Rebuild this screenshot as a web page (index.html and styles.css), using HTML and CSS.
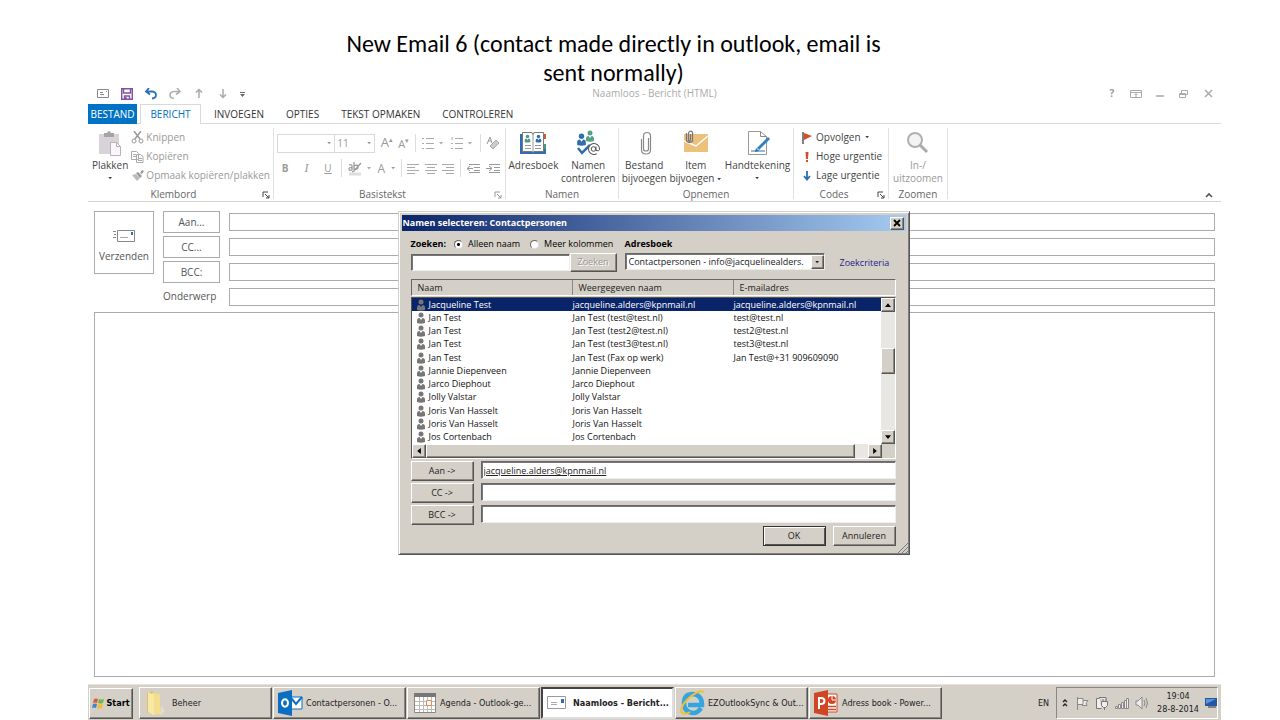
FILE: index.html
```html
<!DOCTYPE html>
<html lang="nl">
<head>
<meta charset="utf-8">
<title>Naamloos - Bericht (HTML)</title>
<link rel="stylesheet" href="styles.css">
</head>
<body>
<svg class="defs" aria-hidden="true">
  <symbol id="person" viewBox="0 0 10 12"><circle cx="5" cy="3" r="2.5"/><path d="M1 11V8.500Q1 6 3.500 6L5 8 6.500 6Q9 6 9 8.500V11Q5 12.500 1 11z"/></symbol>
  <symbol id="launch" viewBox="0 0 8 8"><path d="M1 6V1h5M3 3l4 4M7 4v3H4" fill="none" stroke="currentColor"/></symbol>
  <symbol id="down" viewBox="0 0 6 4"><path d="M0 0h5L2.500 3z" fill="currentColor"/></symbol>
</svg>
<main class="slide">
  <h1 class="slide-title">New Email 6 (contact made directly in outlook, email is<br>sent normally)</h1>

  <section class="app">
    <header class="titlebar">
      <div class="quick">
        <button aria-label="Bericht"><svg width="14" height="12" viewBox="0 0 14 12"><path d="M1.500 1.500h11v8h-11zM4 4.500h3M4 6.500h4M10 3.500h1" fill="none" stroke="#888"/></svg></button>
        <button aria-label="Opslaan"><svg width="14" height="12" viewBox="0 0 14 12"><path d="M1.700.7h10.600v10.600H1.700zM3.500 1v4h7V1M4.500 11V8h5v3M6 9v2" fill="none" stroke="#80529f" stroke-width="1.400"/></svg></button>
        <button aria-label="Ongedaan maken"><svg width="14" height="12" viewBox="0 0 14 12"><path d="M5 0L2 3.500l4 3M2 3.500h6q4 .5 4 3.500T8 10.500" fill="none" stroke="#2b72b8" stroke-width="1.800"/></svg></button>
        <button aria-label="Opnieuw"><svg width="14" height="12" viewBox="0 0 14 12"><path d="M9 0L12 3.500 8 6.500M12 3.500H6Q2 4 2 7T6 10.500" fill="none" stroke="#b0b0b0" stroke-width="1.600"/></svg></button>
        <button aria-label="Vorig item"><svg width="14" height="12" viewBox="0 0 14 12"><path d="M7 10V1M4 4.500L7 1.500l3 3" fill="none" stroke="#aaa" stroke-width="1.500"/></svg></button>
        <button aria-label="Volgend item"><svg width="14" height="12" viewBox="0 0 14 12"><path d="M7 1v9M4 6.500L7 9.500l3-3" fill="none" stroke="#aaa" stroke-width="1.500"/></svg></button>
        <button aria-label="Aanpassen"><svg width="14" height="12" viewBox="0 0 14 12"><path d="M0 4.500h5" stroke="#666"/><path d="M0 6h5L2.500 9z" fill="#666"/></svg></button>
      </div>
      <div class="caption">Naamloos - Bericht (HTML)</div>
      <div class="winbtns">
        <button aria-label="Help"><b>?</b></button>
        <button aria-label="Lintopties"><svg width="12" height="10" viewBox="0 0 12 10"><path d="M.5 1.500h11v7H.5zM1 3.500h10M6 8V5M4.500 6L6 4.500 7.500 6" fill="none" stroke="#aaa"/></svg></button>
        <button aria-label="Minimaliseren"><svg width="12" height="10" viewBox="0 0 12 10"><path d="M2 7h8" stroke="#aaa" stroke-width="1.500"/></svg></button>
        <button aria-label="Vorig formaat"><svg width="12" height="10" viewBox="0 0 12 10"><path d="M1.500 4.500h6v4h-6zM3.500 4V1.500h6v4H8M2 5.500h5" fill="none" stroke="#aaa"/></svg></button>
        <button aria-label="Sluiten"><svg width="12" height="10" viewBox="0 0 12 10"><path d="M3 1l7 7M10 1L3 8" stroke="#aaa" stroke-width="1.500"/></svg></button>
      </div>
    </header>

    <nav class="tabs">
      <button class="tab tab-file">BESTAND</button>
      <button class="tab tab-active">BERICHT</button>
      <button class="tab">INVOEGEN</button>
      <button class="tab">OPTIES</button>
      <button class="tab">TEKST OPMAKEN</button>
      <button class="tab">CONTROLEREN</button>
    </nav>

    <div class="ribbon">
      <div class="group g-clip has-launch">
        <div class="tools">
          <button class="big"><svg width="26" height="27" viewBox="0 0 26 27"><path d="M2 5h20v20H2z" fill="#d8d3d6"/><path d="M7 8V4h3q2-4 4 0h3v4z" fill="#a5a5a5"/><path d="M13.500 13.500h6l4 4v9h-10z" fill="#faf6fb" stroke="#bbb0bd"/><path d="M19.500 13.500v4h4" fill="none" stroke="#bbb0bd"/></svg><span>Plakken</span><svg class="caret"><use href="#down"/></svg></button>
          <div class="smalls dim">
            <button class="small"><svg width="13" height="13" viewBox="0 0 13 13"><path d="M3 0l6 8M10 0L4 8" stroke="#999" stroke-width="1.500"/><circle cx="3" cy="10" r="2" fill="none" stroke="#999"/><circle cx="10" cy="10" r="2" fill="none" stroke="#999"/></svg>Knippen</button>
            <button class="small"><svg width="13" height="13" viewBox="0 0 13 13"><path d="M.5 1.500h5l2 2v6h-7zM5.500 4.500h4l2.500 2v6H5.500zM2 4.500h3M2 6.500h3M7 8.500h4M7 10.500h4" fill="#fff" stroke="#aaa"/></svg>Kopiëren</button>
            <button class="small"><svg width="13" height="13" viewBox="0 0 13 13"><path d="M1 6l4-1 4 4-3 3z" fill="#bbb"/><path d="M5 4l2-1 4 4-2 2zM9 4l2-3 2 1-2 3z" fill="#999"/></svg>Opmaak kopiëren/plakken</button>
          </div>
        </div>
        <div class="group-name">Klembord</div><svg class="launch"><use href="#launch"/></svg>
      </div>

      <div class="group g-text has-launch">
        <div class="format">
          <div class="frow">
            <div class="combo combo-font"><svg class="caret"><use href="#down"/></svg></div>
            <div class="combo combo-size"><span>11</span><svg class="caret"><use href="#down"/></svg></div>
            <span class="grow">A<sup>▴</sup></span><span class="shrink">A<sup>▾</sup></span>
            <i class="bar"></i>
            <svg width="24" height="14" viewBox="0 0 24 14"><path d="M1 2.500h2M1 7.500h2M1 12.500h2M5 2.500h8M5 7.500h8M5 12.500h8" stroke="#aaa"/><path d="M18 6h4l-2 2.500z" fill="#aaa"/></svg>
            <svg width="24" height="14" viewBox="0 0 24 14"><path d="M2 1v3M1 7.500h2M1 12.500h2M5 2.500h8M5 7.500h8M5 12.500h8" stroke="#aaa"/><path d="M18 6h4l-2 2.500z" fill="#aaa"/></svg>
            <i class="bar"></i>
            <svg width="14" height="14" viewBox="0 0 14 14"><path d="M1 8l3-7 2 6M2 5h3" fill="none" stroke="#999"/><path d="M4 10l6-6 3 3-6 6z" fill="#ccc" stroke="#aaa"/></svg>
          </div>
          <div class="frow">
            <b class="fb">B</b><em class="fb">I</em><u class="fb">U</u>
            <i class="bar"></i>
            <svg width="24" height="15" viewBox="0 0 24 15"><path d="M1 13h12" stroke="#ddd" stroke-width="3"/><path d="M1 4q3-1 3 1v4q-3 1-3-1t3-1M6 1v7q4 1 4-2T6 5M13 2L6 10l-2 1" fill="none" stroke="#999" stroke-width="1.300"/><path d="M19 6h4l-2 2.500z" fill="#aaa"/></svg>
            <span class="fa">A</span><svg class="caret"><use href="#down"/></svg>
            <i class="bar"></i>
            <svg width="12" height="11" viewBox="0 0 12 11"><path d="M0 1.500h12M0 4.500h8M0 7.500h12M0 10.500h8" stroke="#aaa"/></svg>
            <svg width="12" height="11" viewBox="0 0 12 11"><path d="M0 1.500h12M2 4.500h8M0 7.500h12M2 10.500h8" stroke="#aaa"/></svg>
            <svg width="12" height="11" viewBox="0 0 12 11"><path d="M0 1.500h12M4 4.500h8M0 7.500h12M4 10.500h8" stroke="#aaa"/></svg>
            <i class="bar"></i>
            <svg width="14" height="11" viewBox="0 0 14 11"><path d="M3 1.500h11M8 4.500h6M8 7.500h6M3 9.500h11M7 5.500H1M4 3L1 5.500 4 8" stroke="#999" fill="none"/></svg>
            <svg width="14" height="11" viewBox="0 0 14 11"><path d="M3 1.500h11M8 4.500h6M8 7.500h6M3 9.500h11M0 5.500h6M3 3l3 2.500L3 8" stroke="#999" fill="none"/></svg>
          </div>
        </div>
        <div class="group-name">Basistekst</div><svg class="launch dim"><use href="#launch"/></svg>
      </div>

      <div class="group g-names">
        <div class="tools">
          <button class="big"><svg width="27" height="27" viewBox="0 0 27 27"><path d="M0 5h26v20H0z" fill="#2f6fae"/><path d="M24 5h2v5h-2z" fill="#d65532"/><path d="M24 10h2v5h-2z" fill="#fff"/><path d="M24 15h2v5h-2z" fill="#4b9b80"/><path d="M2.500 3.500H11q2 0 2 2 0-2 2-2h8.500v19H15q-2 0-2 1 0-1-2-1H2.500z" fill="#fff" stroke="#777"/><path d="M13 5v18M5 16.500h6M5 19.500h6M15 16.500h6M15 19.500h6" stroke="#999"/><use href="#person" x="4" y="5" width="7" height="9" fill="#4b9b80"/><use href="#person" x="15" y="5" width="7" height="9" fill="#2f6fae"/></svg><span>Adresboek</span></button>
          <button class="big"><svg width="27" height="27" viewBox="0 0 27 27"><use href="#person" x="10" y="1" width="10" height="12" fill="#58a184"/><use href="#person" x="1" y="4" width="11" height="13" fill="#2f6fae"/><path d="M3 19l4 5 8-8" fill="none" stroke="#2f6fae" stroke-width="2.500"/><circle cx="19" cy="20" r="5.500" fill="#fff" stroke="#555" stroke-dasharray="29 6" transform="rotate(60 19 20)"/><circle cx="18.500" cy="20" r="2.300" fill="none" stroke="#555"/><path d="M21 17.500v4q3 1 3.500-1" fill="none" stroke="#555"/></svg><span>Namen<br>controleren</span></button>
        </div>
        <div class="group-name">Namen</div>
      </div>

      <div class="group g-insert">
        <div class="tools">
          <button class="big"><svg width="27" height="27" viewBox="0 0 27 27"><path d="M17.500 9v11q0 2-2.500 2t-2.500-2V7q0-3.500 3.500-3.500T19.500 7v14q0 4-4.500 4t-4.500-4V10" fill="none" stroke="#888" stroke-width="1.200"/></svg><span>Bestand<br>bijvoegen</span></button>
          <button class="big"><svg width="27" height="27" viewBox="0 0 27 27"><path d="M2 5h24v18H2z" fill="#ecc17c"/><path d="M2 12l12 5L26 7" fill="none" stroke="#fff" stroke-width="1.500"/><path d="M8.500 5v6q-2 2-2 0V4q1-3 4-1v9q-3 3-6 0V4" fill="none" stroke="#777" stroke-width="1.200"/></svg><span>Item<br>bijvoegen <svg class="caret"><use href="#down"/></svg></span></button>
          <button class="big"><svg width="27" height="27" viewBox="0 0 27 27"><path d="M4.500 2.500h12l6 5v18h-18z" fill="#fff" stroke="#999"/><path d="M16.500 2.500v5h6" fill="none" stroke="#888"/><path d="M7 22h14" stroke="#2f6fae"/><path d="M14 20L25 9" stroke="#2f7fc4" stroke-width="3"/><path d="M11 23l1-4 3 3z" fill="#2f6fae"/></svg><span>Handtekening</span><svg class="caret"><use href="#down"/></svg></button>
        </div>
        <div class="group-name">Opnemen</div>
      </div>

      <div class="group g-codes has-launch">
        <div class="smalls">
          <button class="small"><svg width="10" height="12" viewBox="0 0 10 12"><path d="M1 0v12" stroke="#555" stroke-width="1.500"/><path d="M2 1l8 3-8 4z" fill="#d64b2a"/></svg>Opvolgen <svg class="caret"><use href="#down"/></svg></button>
          <button class="small"><svg width="10" height="12" viewBox="0 0 10 12"><path d="M3.500 1h3L6 8H4zM4 9h2v2H4z" fill="#d64b2a"/></svg>Hoge urgentie</button>
          <button class="small"><svg width="10" height="12" viewBox="0 0 10 12"><path d="M5 1v8M2 6l3 3.500L8 6" fill="none" stroke="#2f6fae" stroke-width="1.800"/></svg>Lage urgentie</button>
        </div>
        <div class="group-name">Codes</div><svg class="launch"><use href="#launch"/></svg>
      </div>

      <div class="group g-zoom">
        <div class="tools dim">
          <button class="big"><svg width="27" height="27" viewBox="0 0 27 27"><circle cx="11" cy="11" r="7" fill="#f4f2f5" stroke="#b0b0b0" stroke-width="2"/><path d="M16 16l7 7" stroke="#aaa" stroke-width="3"/></svg><span>In-/<br>uitzoomen</span></button>
        </div>
        <div class="group-name">Zoomen</div>
      </div>
      <button class="collapse" aria-label="Lint samenvouwen"><svg width="8" height="6" viewBox="0 0 8 6"><path d="M1 5l3-3 3 3" fill="none" stroke="#555" stroke-width="1.600"/></svg></button>
    </div>

    <form class="compose">
      <div class="envelope">
        <button type="button" class="send"><svg width="24" height="14" viewBox="0 0 24 14"><path d="M1 2.500h3M2 5.500h2M1 8.500h3" stroke="#888"/><path d="M5.500 1.500h17v11h-17z" fill="#fff" stroke="#888"/><path d="M8 8.500h8" stroke="#aaa"/><path d="M19 3h2v3h-2z" fill="#2f6fae"/></svg>Verzenden</button>
        <div class="fields">
          <button type="button">Aan...</button><input aria-label="Aan">
          <button type="button">CC...</button><input aria-label="CC">
          <button type="button">BCC:</button><input aria-label="BCC">
          <label for="subject">Onderwerp</label><input id="subject">
        </div>
      </div>
      <textarea class="message" aria-label="Bericht"></textarea>
    </form>

    <div class="dialog" role="dialog" aria-labelledby="dlg-title">
      <div class="dlg-title"><span id="dlg-title">Namen selecteren: Contactpersonen</span><button class="raised dlg-close" aria-label="Sluiten"><svg width="8" height="8" viewBox="0 0 8 8"><path d="M1 1l6 6M7 1L1 7" stroke="#000" stroke-width="1.800"/></svg></button></div>
      <div class="dlg-body">
        <div class="search">
          <div class="search-left">
            <div class="opts"><b>Zoeken:</b><label><input type="radio" name="scope" checked>Alleen naam</label><label><input type="radio" name="scope">Meer kolommen</label></div>
            <div class="find"><input class="sunken" aria-label="Zoeken"><button class="raised" disabled>Zoeken</button></div>
          </div>
          <div class="search-mid">
            <label class="opts" for="book"><b>Adresboek</b></label>
            <div class="pick sunken"><select id="book"><option>Contactpersonen - info@jacquelinealders.</option></select><span class="raised arrow"><svg class="caret"><use href="#down"/></svg></span></div>
          </div>
          <a class="criteria" href="#">Zoekcriteria</a>
        </div>
        <div class="cols"><span>Naam</span><span>Weergegeven naam</span><span>E-mailadres</span></div>
        <div class="list">
          <table class="people">
            <colgroup><col class="c1"><col class="c2"><col></colgroup>
            <tbody>
            <tr class="sel"><td><svg class="who"><use href="#person"/></svg>Jacqueline Test</td><td>jacqueline.alders@kpnmail.nl</td><td>jacqueline.alders@kpnmail.nl</td></tr>
            <tr><td><svg class="who"><use href="#person"/></svg>Jan Test</td><td>Jan Test (test@test.nl)</td><td>test@test.nl</td></tr>
            <tr><td><svg class="who"><use href="#person"/></svg>Jan Test</td><td>Jan Test (test2@test.nl)</td><td>test2@test.nl</td></tr>
            <tr><td><svg class="who"><use href="#person"/></svg>Jan Test</td><td>Jan Test (test3@test.nl)</td><td>test3@test.nl</td></tr>
            <tr><td><svg class="who"><use href="#person"/></svg>Jan Test</td><td>Jan Test (Fax op werk)</td><td>Jan Test@+31 909609090</td></tr>
            <tr><td><svg class="who"><use href="#person"/></svg>Jannie Diepenveen</td><td>Jannie Diepenveen</td><td></td></tr>
            <tr><td><svg class="who"><use href="#person"/></svg>Jarco Diephout</td><td>Jarco Diephout</td><td></td></tr>
            <tr><td><svg class="who"><use href="#person"/></svg>Jolly Valstar</td><td>Jolly Valstar</td><td></td></tr>
            <tr><td><svg class="who"><use href="#person"/></svg>Joris Van Hasselt</td><td>Joris Van Hasselt</td><td></td></tr>
            <tr><td><svg class="who"><use href="#person"/></svg>Joris Van Hasselt</td><td>Joris Van Hasselt</td><td></td></tr>
            <tr><td><svg class="who"><use href="#person"/></svg>Jos Cortenbach</td><td>Jos Cortenbach</td><td></td></tr>
            </tbody>
          </table>
          <div class="vscroll"><button class="raised" aria-label="Omhoog"><svg width="6" height="4" viewBox="0 0 8 5"><path d="M0 5h8L4 0z"/></svg></button><span class="gap-a"></span><span class="raised vthumb"></span><span class="gap-b"></span><button class="raised" aria-label="Omlaag"><svg width="6" height="4" viewBox="0 0 8 5"><path d="M0 0h8L4 5z"/></svg></button></div>
          <div class="hscroll"><button class="raised" aria-label="Links"><svg width="4" height="6" viewBox="0 0 5 8"><path d="M5 0v8L0 4z"/></svg></button><span class="raised hthumb"></span><span class="hgap"></span><button class="raised" aria-label="Rechts"><svg width="4" height="6" viewBox="0 0 5 8"><path d="M0 0v8l5-4z"/></svg></button></div>
        </div>
        <div class="rcpt">
          <button class="raised">Aan -&gt;</button><input class="sunken linked" aria-label="Aan" value="jacqueline.alders@kpnmail.nl">
          <button class="raised">CC -&gt;</button><input class="sunken" aria-label="CC">
          <button class="raised">BCC -&gt;</button><input class="sunken" aria-label="BCC">
        </div>
        <div class="actions"><button class="raised ok">OK</button><button class="raised">Annuleren</button></div>
      </div>
      <svg class="grip" width="10" height="10" viewBox="0 0 10 10"><path d="M0 10L10 0M4 10l6-6M8 10l2-2" stroke="#777"/></svg>
    </div>

    <footer class="taskbar">
      <button class="raised start"><svg width="13" height="13" viewBox="0 0 13 13"><path d="M2 2q2-1 4 0L5 6q-2-1-4 0z" fill="#e5572a"/><path d="M7 2q3 1 5 0l-1 4q-3 1-5 0z" fill="#74b543"/><path d="M1 7q2-1 4 0l-1 4q-2-1-4 0z" fill="#3f86d0"/><path d="M6 7q2 1 5 0l-1 4q-3 1-5 0z" fill="#f4bd2d"/></svg>Start</button>
      <div class="tasks">
        <button class="raised task"><svg width="28" height="26" viewBox="0 0 28 26"><path d="M4 3l6-2v20l-6 2z" fill="#e3c25b"/><path d="M9 3l8 1v20l-8 1z" fill="#f4dd8b"/><path d="M5 2l6 3v20l-6-3z" fill="#f8e8a8"/><path d="M18 16l4 5-5 4z" fill="#e8dfc0"/></svg><span>Beheer</span></button>
        <button class="raised task"><svg width="28" height="26" viewBox="0 0 28 26"><path d="M12 7h13v12H12z" fill="#fff" stroke="#0a6fc2"/><path d="M14 8l5 6 6-7" fill="none" stroke="#0a6fc2" stroke-width="2"/><path d="M1 3l14-3v26L1 23z" fill="#0a6fc2"/><ellipse cx="8" cy="13" rx="3" ry="3.700" fill="none" stroke="#fff" stroke-width="2"/></svg><span>Contactpersonen - O...</span></button>
        <button class="raised task"><svg width="28" height="26" viewBox="0 0 28 26"><path d="M3.500 3.500h21v19h-21z" fill="#fff" stroke="#888"/><path d="M3 3h22v4H3z" fill="#777"/><path d="M4 11.500h20M4 15.500h20M4 19.500h20M8.500 7v15M12.500 7v15M16.500 7v15M20.500 7v15" stroke="#bbb"/><path d="M15.500 10.500h5v5h-5z" fill="#fff" stroke="#e18a56"/></svg><span>Agenda - Outlook-ge...</span></button>
        <button class="task task-on"><svg width="28" height="26" viewBox="0 0 28 26"><path d="M3.500 6.500h18v12h-18z" fill="#fff" stroke="#999"/><path d="M7 12.500h6M7 14.500h6" stroke="#aaa"/><path d="M17 9h3v4h-3z" fill="#2f6fae"/></svg><span>Naamloos - Bericht...</span></button>
        <button class="raised task"><svg width="28" height="26" viewBox="0 0 28 26"><path d="M22 18q-3 5-8 5-9-1-9-10t9-9q9 1 9 11H9" fill="none" stroke="#35a5df" stroke-width="4.500"/><path d="M3 23Q0 17 10 8T25 2M3 23q3 2 8-1" fill="none" stroke="#f0c030" stroke-width="2"/></svg><span>EZOutlookSync &amp; Out...</span></button>
        <button class="raised task"><svg width="28" height="26" viewBox="0 0 28 26"><path d="M13 4h11v18H13z" fill="#fff" stroke="#d04625"/><circle cx="19" cy="10" r="4" fill="#d04625"/><path d="M19 6v4h4" fill="none" stroke="#fff"/><path d="M15 16.500h8M15 19.500h8" stroke="#d04625" stroke-width="1.500"/><path d="M1 3l14-3v26L1 23z" fill="#d04625"/><path d="M6 19V8h2q3.500 0 3.500 3T8 14H6" fill="none" stroke="#fff" stroke-width="2"/></svg><span>Adress book - Power...</span></button>
      </div>
      <span class="lang">EN</span>
      <div class="tray">
        <svg width="8" height="10" viewBox="0 0 8 10"><path d="M2 4l2-2 2 2M2 8l2-2 2 2" fill="none" stroke="#222" stroke-width="1.400"/></svg>
        <svg width="14" height="14" viewBox="0 0 14 14"><path d="M2.500 1v13M3 2.500h5v6H3M8 4.500h5L11 7l1 2.500H7" fill="#eee" stroke="#888"/></svg>
        <svg width="14" height="14" viewBox="0 0 14 14"><path d="M4.500 2.500h-3v10h5M4 1.500h7v3M6.500 5.500h6v4l-2 2h-2l-2-2zM8 3v2M11 3v2M9.500 12v2" fill="#eee" stroke="#777"/></svg>
        <svg width="14" height="14" viewBox="0 0 14 14"><path d="M.5 10.500h2v2h-2zM3.500 8.500h2v4h-2zM6.500 6.500h2v6h-2zM9.500 4.500h2v8h-2zM11.500 2.500h2v10h-2z" fill="#eee" stroke="#888"/></svg>
        <svg width="14" height="14" viewBox="0 0 14 14"><path d="M1 5h2l4-4v12L3 9H1z" fill="#eee" stroke="#888"/><path d="M9 4q2 3 0 6M11 2q3 5 0 10" fill="none" stroke="#888"/></svg>
        <div class="clock">19:04<br>28-8-2014</div>
        <svg width="12" height="12" viewBox="0 0 12 12"><path d="M0 1h12v8H0z" fill="#2357a4"/><path d="M1 2h10L1 7z" fill="#5b94d8"/><path d="M3 10h8" stroke="#333"/></svg>
      </div>
    </footer>
  </section>
</main>
</body>
</html>
```
FILE: styles.css
```css
* { box-sizing: border-box; }
body { margin: 0; background: #fff; font: 10px/13px "Open Sans", "Noto Sans", sans-serif; color: #444; }
button, input, select, textarea { font: inherit; color: inherit; margin: 0; padding: 0; border: 0; background: none; border-radius: 0; outline: 0; }
button { white-space: nowrap; }
svg { flex: none; display: block; }
.defs { position: absolute; width: 0; height: 0; }

.slide { display: flex; flex-direction: column; min-height: 100vh; padding: 29px 59px 0 88px; }
.slide-title { margin: 0 82px 0 0; font: 24px/29px Carlito, Lato, sans-serif; color: #000; text-align: center; }
.app { position: relative; flex: 1; display: flex; flex-direction: column; margin-top: -1px; }

.titlebar { display: grid; grid-template-columns: 1fr auto 1fr; align-items: center; height: 13px; }
.quick { display: flex; gap: 10px; padding-left: 8px; }
.caption { color: #aaa; line-height: 15px; }
.winbtns { display: flex; justify-content: flex-end; gap: 12px; padding-right: 7px; color: #999; }
.winbtns button { width: 12px; }

.tabs { display: flex; margin-top: 5px; height: 20px; border-bottom: 1px solid #d9d9d9; color: #333; }
.tab { padding: 0 11px; height: 20px; }
.tab-file { width: 49px; padding: 0; background: #0072c6; color: #fff; }
.tab-active { width: 61px; padding: 0; margin: 0 2px 0 3px; background: #fff; color: #0072c6; border: 1px solid #d9d9d9; border-bottom: 0; }

.ribbon { display: flex; position: relative; height: 78px; border-bottom: 1px solid #d5d5d5; padding: 4px 0 2px; }
.group { position: relative; display: flex; flex-direction: column; justify-content: space-between; border-right: 1px solid #e1e1e1; }
.g-clip { width: 186px; }
.g-text { width: 232px; }
.g-names { width: 113px; }
.g-insert { width: 175px; }
.g-codes { width: 95px; }
.g-zoom { width: 59px; }
.group-name { text-align: center; line-height: 10px; color: #666; }
.has-launch .group-name { padding-right: 14px; }
.launch { position: absolute; right: 3px; bottom: 0; width: 8px; height: 8px; }
.tools { display: flex; justify-content: space-evenly; }
.g-clip .tools { justify-content: flex-start; gap: 3px; padding-left: 4px; }
.big { display: flex; flex-direction: column; align-items: center; line-height: 13px; gap: 3px; padding-top: 1px; }
.big .caret { margin-top: 2px; }
.big span .caret { display: inline-block; margin: 0; vertical-align: middle; }
.caret { width: 5px; height: 3px; }
.dim { color: #999; }
.smalls { display: flex; flex-direction: column; align-items: flex-start; }
.small { display: flex; align-items: center; gap: 2px; height: 19px; }
.g-codes .small { gap: 4px; padding-left: 8px; }
.format { display: flex; flex-direction: column; gap: 5px; padding: 5px 5px 0 3px; color: #999; }
.frow { display: flex; align-items: center; justify-content: space-between; height: 20px; }
.combo { display: flex; align-items: center; justify-content: space-between; height: 19px; border: 1px solid #d9d9d9; padding: 0 2px; }
.combo-font { width: 58px; justify-content: flex-end; }
.combo-size { width: 41px; margin-left: -6px; }
.grow { font-size: 13px; }
.shrink { font-size: 11px; }
.frow sup { font-size: 7px; line-height: 7px; }
.bar { width: 1px; height: 18px; background: #ddd; }
.fb { width: 16px; text-align: center; }
em.fb { font-family: "Liberation Serif", serif; font-size: 12px; }
.fa { font-size: 12px; }
.collapse { position: absolute; right: 8px; bottom: 3px; }

.compose { flex: 1; display: flex; flex-direction: column; padding: 9px 6px 7px; color: #555; }
.envelope { display: flex; gap: 9px; }
.send { width: 60px; height: 63px; border: 1px solid #ababab; display: flex; flex-direction: column; align-items: center; justify-content: center; gap: 7px; padding-top: 6px; }
.fields { flex: 1; display: grid; grid-template-columns: 57px 1fr; gap: 3px 9px; align-items: center; }
.fields button { height: 22px; border: 1px solid #ababab; }
.fields input { height: 18px; border: 1px solid #ababab; width: 100%; }
.fields label { line-height: 21px; }
.message { flex: 1; resize: none; display: block; border: 1px solid #ababab; margin-top: 5px; width: 100%; }

.raised { background: #d4d0c8; border: 1px solid; border-color: #fff #555 #555 #fff; box-shadow: inset -1px -1px #8c8880; display: flex; align-items: center; justify-content: center; }
.sunken { background: #fff; border: 1px solid; border-color: #666 #eee #eee #666; box-shadow: inset 1px 1px #777; }
.dialog { position: absolute; left: calc(50% - 1px); top: 125px; transform: translateX(-50%); width: 512px; padding: 3px; background: #d4d0c8; border: 1px solid; border-color: #d4d0c8 #555 #555 #d4d0c8; box-shadow: inset 1px 1px #fff, inset -1px -1px #808080; color: #222; font-size: 9px; line-height: 12px; }
.dlg-title { display: flex; justify-content: space-between; align-items: center; height: 16px; padding: 0 2px 0 1px; background: linear-gradient(90deg, #0a246a, #a6caf0); color: #fff; font-weight: bold; }
.dlg-close { width: 14px; height: 13px; }
.dlg-body { padding: 5px 10px 5px 9px; }
.search { display: flex; gap: 8px; align-items: flex-end; }
.search-left { width: 206px; }
.search-mid { width: 200px; }
.opts { display: flex; align-items: center; gap: 8px; height: 16px; color: #000; }
.opts label { display: flex; align-items: center; gap: 5px; }
.opts label + label { margin-left: 2px; }
.opts input { appearance: none; width: 9px; height: 9px; border-radius: 50%; border: 1px solid; border-color: #666 #ddd #ddd #666; background: #fff; }
.opts input:checked { background: radial-gradient(circle, #000 0 1px, #fff 2px); }
.find { display: flex; height: 20px; align-items: center; }
.find input { flex: 1; min-width: 0; height: 17px; }
.find button { width: 47px; height: 19px; color: #999; text-shadow: 1px 1px #fff; }
.pick { display: flex; height: 17px; margin: 1px 0 2px; }
.pick select { appearance: none; flex: 1; min-width: 0; padding-left: 3px; overflow: hidden; }
.arrow { width: 13px; height: 14px; margin-top: 1px; }
.criteria { color: #1c1c8c; text-decoration: none; line-height: 18px; padding-left: 7px; }
.cols { display: grid; grid-template-columns: 161px 161px 1fr; height: 17px; margin-top: 7px; border: 1px solid; border-color: #666 #fff #fff #666; line-height: 15px; }
.cols span { padding-left: 6px; border-right: 1px solid #888; }
.cols span:last-child { border: 0; }
.list { display: grid; grid-template-columns: 1fr 14px; margin-top: 1px; border: 1px solid; border-color: #555 #fff #fff #555; background: #fff; }
.people { width: 100%; height: 146px; table-layout: fixed; border-collapse: collapse; line-height: 12px; color: #111; }
.people td { padding: 0; white-space: nowrap; }
.c1, .c2 { width: 161px; }
.sel { background: #0a246a; color: #fff; }
.who { display: inline-block; width: 10px; height: 12px; margin: 0 3px 0 4px; vertical-align: top; fill: #777; }
.vscroll { display: flex; flex-direction: column; background: #e9e7e3; }
.vscroll button { height: 14px; }
.gap-a { flex: 36; }
.gap-b { flex: 56; }
.vthumb { height: 26px; }
.hscroll { display: flex; grid-column: 1 / -1; height: 14px; padding-right: 13px; background: #d4d0c8; }
.hscroll button { width: 14px; }
.hthumb { flex: 1; }
.hgap { width: 13px; background: #e9e7e3; }
.rcpt { display: grid; grid-template-columns: 63px 1fr; gap: 2px 7px; margin-top: 2px; }
.rcpt button { height: 20px; }
.rcpt input { height: 18px; padding: 0 2px; width: 100%; }
.linked { text-decoration: underline; }
.actions { display: flex; justify-content: flex-end; gap: 7px; margin-top: 1px; }
.actions button { width: 63px; height: 20px; }
.actions .ok { border-color: #333; box-shadow: inset 1px 1px #fff, inset -1px -1px #555; }
.grip { position: absolute; right: 1px; bottom: 1px; }

.taskbar { display: flex; align-items: center; height: 36px; background: #d4d0c8; border-top: 1px solid #e6e3dd; color: #222; padding: 1px 3px 0 1px; font: 9px/12px "DejaVu Sans Condensed", "DejaVu Sans", sans-serif; }
.start { width: 44px; height: 31px; font-weight: bold; color: #000; gap: 1px; }
.tasks { display: flex; gap: 1px; margin-left: 6px; }
.task { width: 133px; height: 32px; justify-content: flex-start; padding: 0 3px; gap: 1px; }
.task-on { display: flex; align-items: center; background: #fff; border: 2px solid #444; border-right-color: #ddd; border-bottom-color: #ddd; font-weight: bold; }
.task-on svg { margin-left: -2px; }
.lang { margin-left: auto; padding-right: 7px; }
.tray { display: flex; align-items: center; gap: 6px; height: 32px; padding-left: 4px; border: 1px solid; border-color: #888 #fff #fff #888; }
.clock { text-align: center; line-height: 13px; padding-left: 2px; }
```
